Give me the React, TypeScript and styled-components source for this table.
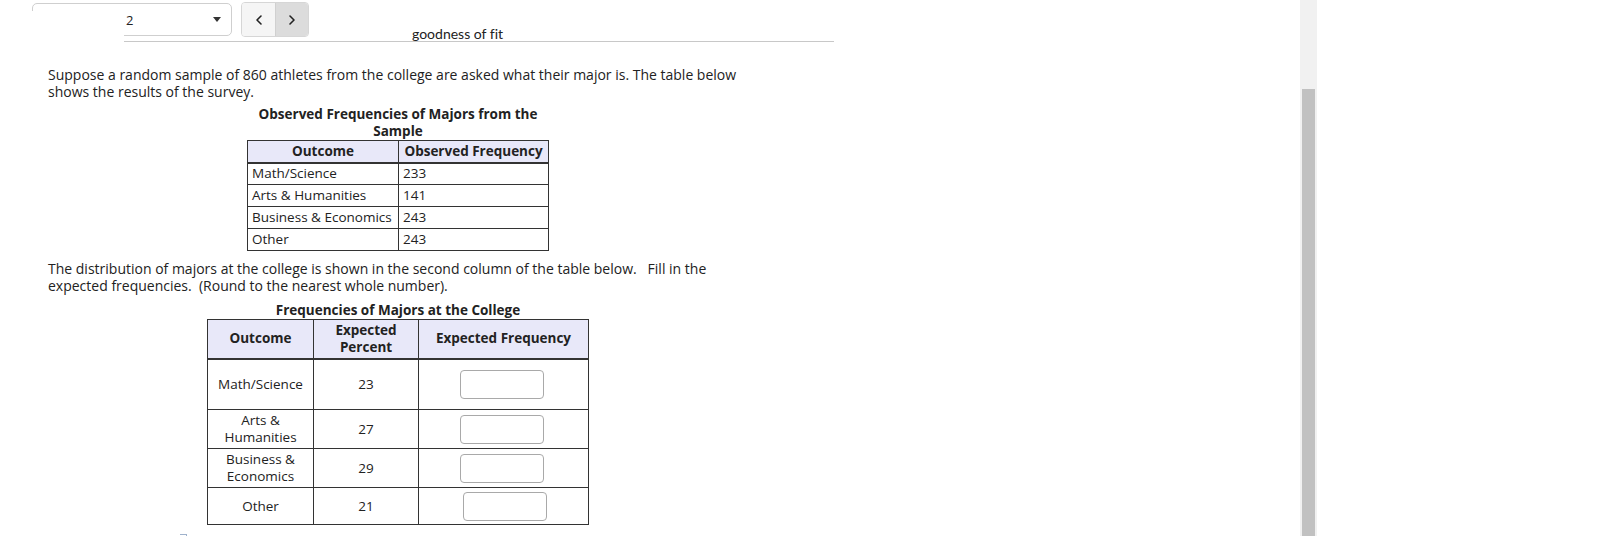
import React from 'react';
import styled, { createGlobalStyle } from 'styled-components';
import { ChevronLeft, ChevronRight } from 'lucide-react';

const GlobalStyle = createGlobalStyle`
  html, body { margin: 0; padding: 0; background: #fff; }
  body { font-family: "Open Sans", "Liberation Sans", sans-serif; color: #222; }
`;

const Page = styled.div`
  display: flex;
  width: 1600px;
  height: 536px;
  overflow: hidden;
  background: #fff;
`;

const Frame = styled.div`
  width: 1300px;
  height: 536px;
  overflow: hidden;
`;

const ScrollTrack = styled.div`
  width: 17px;
  height: 536px;
  box-sizing: border-box;
  padding-top: 89px;
  background: #f1f1f1;
  display: flex;
  justify-content: center;
`;

const ScrollThumb = styled.div`
  width: 13px;
  height: 100%;
  background: #c1c1c1;
`;

const Toolbar = styled.div`
  display: flex;
  align-items: flex-start;
  gap: 9px;
  padding: 3px 0 0 32px;
`;

const SelectBox = styled.div`
  position: relative;
  box-sizing: border-box;
  width: 200px;
  height: 33px;
  border: 1px solid #cfcfcf;
  border-radius: 5px;
  display: flex;
  align-items: center;
  padding-left: 93px;
  font-size: 13px;
  color: #222;
  &::before {
    content: '';
    position: absolute;
    left: -2px;
    bottom: -2px;
    width: 93px;
    height: 26px;
    background: #fff;
  }
`;

const Caret = styled.span`
  margin-left: auto;
  margin-right: 10px;
  width: 0;
  height: 0;
  border-left: 4px solid transparent;
  border-right: 4px solid transparent;
  border-top: 5px solid #333;
`;

const NavGroup = styled.div`
  display: flex;
  margin-top: -1px;
  border: 1px solid #d6d6d6;
  border-radius: 4px;
  overflow: hidden;
`;

const NavButton = styled.button<{ $active?: boolean }>`
  width: 33px;
  height: 33px;
  padding: 0;
  border: none;
  border-left: ${p => (p.$active ? '1px solid #d0d0d0' : 'none')};
  background: ${p => (p.$active ? '#dcdcdc' : '#f5f5f5')};
  color: #222;
  display: flex;
  align-items: center;
  justify-content: center;
`;

const Title = styled.div`
  margin: -11px 0 0 124px;
  width: 710px;
  padding: 0 0 0 288px;
  box-sizing: border-box;
  border-bottom: 1px solid #c8c8c8;
  font-family: Lato, "Open Sans", sans-serif;
  font-size: 14px;
  font-variant-ligatures: none;
  line-height: 15px;
  color: #222;
`;

const Content = styled.div`
  margin-left: 48px;
  width: 700px;
  font-size: 14px;
  line-height: 17px;
  color: #222;
`;

const Para = styled.p<{ $top: number }>`
  margin: ${p => p.$top}px 0 0 0;
`;

const Table = styled.table<{ $top: number }>`
  margin: ${p => p.$top}px auto 0 auto;
  border-collapse: collapse;
  table-layout: fixed;
  font-size: 13.5px;
`;

const Caption = styled.caption`
  font-weight: 700;
  line-height: 17px;
  text-align: center;
`;

const HeadCell = styled.th<{ $w: number; $h: number }>`
  width: ${p => p.$w}px;
  height: ${p => p.$h}px;
  box-sizing: border-box;
  padding: 0 4px;
  border: 1px solid #333;
  border-bottom-width: 2px;
  background: #e8e8f9;
  font-weight: 700;
  text-align: center;
  vertical-align: middle;
  line-height: 17px;
`;

const Cell = styled.td<{ $h: number; $center?: boolean }>`
  height: ${p => p.$h}px;
  box-sizing: border-box;
  padding: 0 ${p => (p.$center ? 5 : 4)}px;
  border: 1px solid #333;
  text-align: ${p => (p.$center ? 'center' : 'left')};
  white-space: ${p => (p.$center ? 'normal' : 'nowrap')};
  vertical-align: middle;
  line-height: 17px;
`;

const AnswerInput = styled.input<{ $shift?: number }>`
  display: block;
  box-sizing: border-box;
  width: 84px;
  height: 29px;
  margin: 0 auto;
  position: relative;
  left: ${p => p.$shift ?? -2}px;
  border: 1px solid #a9a9a9;
  border-radius: 4px;
  background: #fff;
`;

const Tick = styled.div`
  margin: 9px 0 0 132px;
  width: 6px;
  height: 2px;
  border-top: 1px solid #9fb2cc;
  border-right: 1px solid #9fb2cc;
`;

const observed = [
  ['Math/Science', '233'],
  ['Arts & Humanities', '141'],
  ['Business & Economics', '243'],
  ['Other', '243'],
];

const expected: { name: React.ReactNode; pct: string; h: number; shift?: number }[] = [
  { name: 'Math/Science', pct: '23', h: 51 },
  { name: <>Arts &amp;<br />Humanities</>, pct: '27', h: 39 },
  { name: <>Business &amp;<br />Economics</>, pct: '29', h: 39 },
  { name: 'Other', pct: '21', h: 37, shift: 1 },
];

export default function App() {
  return (
    <>
      <GlobalStyle />
      <Page>
        <Frame>
          <Toolbar>
            <SelectBox>
              <span>2</span>
              <Caret />
            </SelectBox>
            <NavGroup>
              <NavButton>
                <ChevronLeft size={16} strokeWidth={2.4} />
              </NavButton>
              <NavButton $active>
                <ChevronRight size={16} strokeWidth={2.4} />
              </NavButton>
            </NavGroup>
          </Toolbar>
          <Title>goodness of fit</Title>
          <Content>
            <Para $top={24}>
              Suppose a random sample of 860 athletes from the college are asked what their major is. The table below
              shows the results of the survey.
            </Para>
            <Table $top={6}>
              <Caption>Observed Frequencies of Majors from the Sample</Caption>
              <thead>
                <tr>
                  <HeadCell $w={151} $h={22}>Outcome</HeadCell>
                  <HeadCell $w={150} $h={22}>Observed Frequency</HeadCell>
                </tr>
              </thead>
              <tbody>
                {observed.map(([o, f]) => (
                  <tr key={o}>
                    <Cell $h={22}>{o}</Cell>
                    <Cell $h={22}>{f}</Cell>
                  </tr>
                ))}
              </tbody>
            </Table>
            <Para $top={9}>
              The distribution of majors at the college is shown in the second column of the table below.&nbsp;&nbsp; Fill in the
              expected frequencies.&nbsp; (Round to the nearest whole number).
            </Para>
            <Table $top={8}>
              <Caption>Frequencies of Majors at the College</Caption>
              <thead>
                <tr>
                  <HeadCell $w={106} $h={39}>Outcome</HeadCell>
                  <HeadCell $w={105} $h={39}>Expected Percent</HeadCell>
                  <HeadCell $w={170} $h={39}>Expected Frequency</HeadCell>
                </tr>
              </thead>
              <tbody>
                {expected.map((r, i) => (
                  <tr key={i}>
                    <Cell $h={r.h} $center>{r.name}</Cell>
                    <Cell $h={r.h} $center>{r.pct}</Cell>
                    <Cell $h={r.h} $center>
                      <AnswerInput type="text" $shift={r.shift} />
                    </Cell>
                  </tr>
                ))}
              </tbody>
            </Table>
            <Tick />
          </Content>
        </Frame>
        <ScrollTrack>
          <ScrollThumb />
        </ScrollTrack>
      </Page>
    </>
  );
}
